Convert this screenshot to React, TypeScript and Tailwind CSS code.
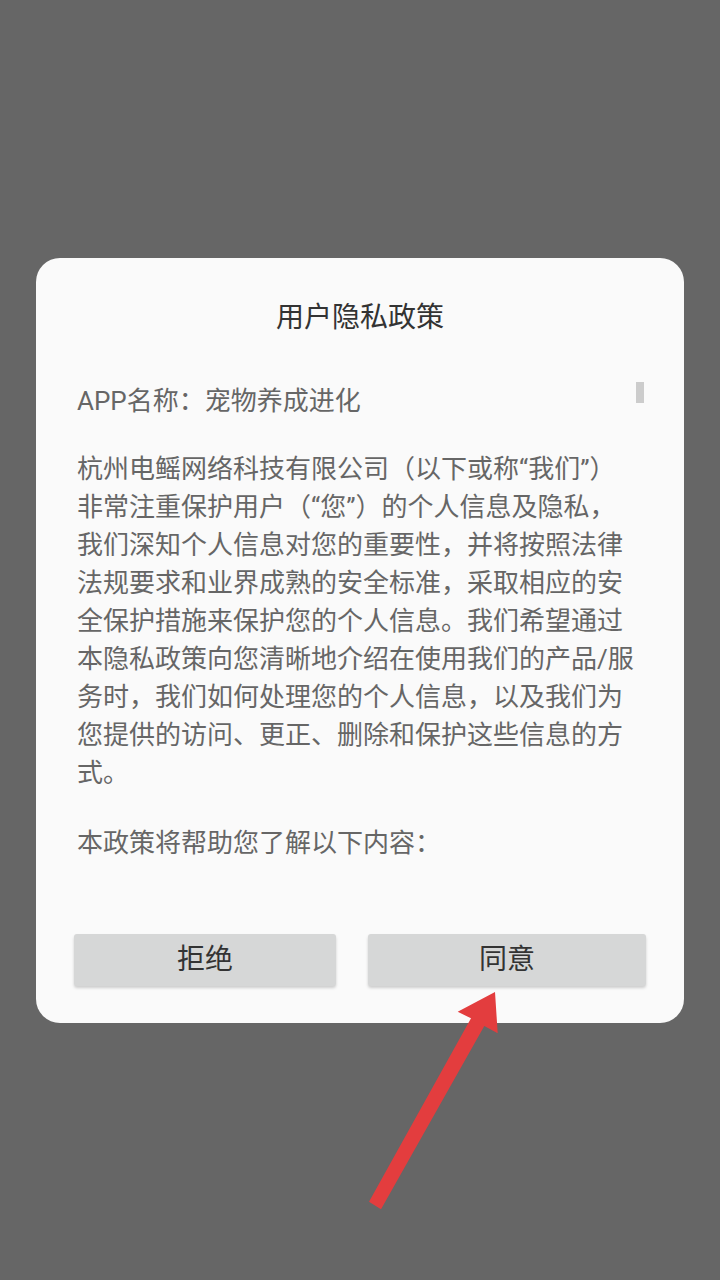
import React from 'react';

const introLines = [
  '杭州电鳐网络科技有限公司（以下或称“我们”）',
  '非常注重保护用户（“您”）的个人信息及隐私，',
  '我们深知个人信息对您的重要性，并将按照法律',
  '法规要求和业界成熟的安全标准，采取相应的安',
  '全保护措施来保护您的个人信息。我们希望通过',
  '本隐私政策向您清晰地介绍在使用我们的产品/服',
  '务时，我们如何处理您的个人信息，以及我们为',
  '您提供的访问、更正、删除和保护这些信息的方',
  '式。',
];

function Arrow() {
  return (
    <svg
      className="pointer-events-none absolute left-0 top-0"
      width="720"
      height="1280"
      viewBox="0 0 720 1280"
    >
      <polygon
        points="495,992 457.7,1011.7 471,1018.3 369,1201.7 381,1209.3 484.3,1026 497.7,1033.3"
        fill="#e33d3e"
      />
    </svg>
  );
}

export default function App() {
  return (
    <div
      className="relative flex h-[1280px] w-[720px] items-center justify-center bg-[#666666]"
      style={{ fontFamily: 'Roboto, "Noto Sans CJK SC", sans-serif' }}
    >
      <div className="flex h-[765px] w-[648px] flex-col rounded-[24px] bg-[#fafafa]">
        <h1 className="pt-[40px] text-center text-[28px] leading-[40px] font-normal text-[#333333]">
          用户隐私政策
        </h1>

        <div className="relative mt-[44px] flex-1 overflow-hidden pl-[41px] pr-[40px] text-[26px] leading-[38px] text-[#666666]">
          <div className="absolute right-[40px] top-0 h-[21px] w-[8px] bg-[#cccccc]" />
          <p className="whitespace-nowrap">APP名称：宠物养成进化</p>
          <p className="mt-[30px] whitespace-nowrap">
            {introLines.map((line) => (
              <span key={line} className="block">
                {line}
              </span>
            ))}
          </p>
          <p className="mt-[32px] whitespace-nowrap">本政策将帮助您了解以下内容：</p>
        </div>

        <div className="flex gap-[32px] px-[38px] pb-[37px]">
          <button
            type="button"
            className="h-[52px] w-[262px] rounded-[3px] bg-[#d6d7d7] text-[28px] text-[#333333] shadow-[0_2px_3px_rgba(0,0,0,0.18)]"
          >
            拒绝
          </button>
          <button
            type="button"
            className="h-[52px] flex-1 rounded-[3px] bg-[#d6d7d7] text-[28px] text-[#333333] shadow-[0_2px_3px_rgba(0,0,0,0.18)]"
          >
            同意
          </button>
        </div>
      </div>
      <Arrow />
    </div>
  );
}
